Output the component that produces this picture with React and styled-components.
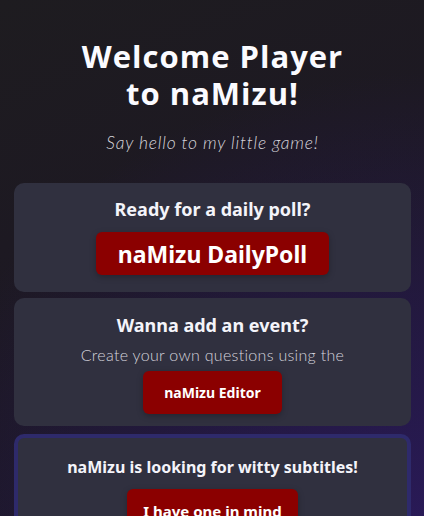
import React from "react";
import styled, { createGlobalStyle } from "styled-components";

const GlobalStyle = createGlobalStyle`
  html, body { margin: 0; padding: 0; }
  body {
    font-family: "Noto Sans", "Open Sans", sans-serif;
    background: #1b1920;
  }
`;

const Page = styled.div`
  min-height: 516px;
  box-sizing: border-box;
  padding: 38px 13px 0 14px;
  background:
    radial-gradient(ellipse 520px 480px at 100% 100%, rgba(42, 26, 90, 1), rgba(42, 26, 90, 0) 100%),
    linear-gradient(160deg, #1e1c20 0%, #1d1922 35%, #1b1628 100%);
  color: #fff;
  overflow: hidden;
`;

const Header = styled.header`
  display: flex;
  flex-direction: column;
  align-items: center;
  margin-bottom: 30px;
`;

const Title = styled.h1`
  margin: 0;
  font-family: "Open Sans", sans-serif;
  font-weight: 700;
  font-size: 31px;
  line-height: 37px;
  letter-spacing: 1px;
  text-align: center;
  color: #fbfbff;
`;

const Subtitle = styled.p`
  margin: 20px 0 0;
  font-family: "Lato", sans-serif;
  font-style: italic;
  font-weight: 300;
  font-size: 17.5px;
  color: #d6d4da;
  letter-spacing: 0.8px;
`;

const Cards = styled.div`
  display: flex;
  flex-direction: column;
  gap: 6px;
`;

const Card = styled.section`
  display: flex;
  flex-direction: column;
  align-items: center;
  background: #30303f;
  border-radius: 10px;
  padding: ${(p) => p.$pad || "16px 0 16px"};
  border: ${(p) => (p.$highlight ? "4px solid #2e2a6b" : "none")};
  margin-top: ${(p) => (p.$highlight ? "2px" : "0")};
`;

const CardTitle = styled.h2`
  margin: 0;
  font-family: "Noto Sans", sans-serif;
  font-weight: 700;
  font-size: ${(p) => p.$size || "18px"};
  line-height: 24px;
  color: #f4f4fa;
`;

const CardText = styled.p`
  margin: 8px 0 0;
  font-family: "Lato", sans-serif;
  font-weight: 300;
  font-size: 16px;
  color: #d4d3dc;
  letter-spacing: 0.3px;
`;

const Button = styled.button`
  border: none;
  background: #8b0000;
  color: #fff;
  font-family: "Noto Sans", sans-serif;
  font-weight: 700;
  font-size: ${(p) => p.$size || "14px"};
  border-radius: 6px;
  height: ${(p) => p.$height || "43px"};
  box-sizing: border-box;
  padding: 0 ${(p) => p.$padX || "20px"};
  margin-top: ${(p) => p.$mt || "10px"};
  box-shadow: 0 2px 6px rgba(0, 0, 0, 0.25);
  cursor: pointer;
`;

export default function App() {
  return (
    <>
      <GlobalStyle />
      <Page>
        <Header>
          <Title>
            Welcome Player
            <br />
            to naMizu!
          </Title>
          <Subtitle>Say hello to my little game!</Subtitle>
        </Header>
        <Cards>
          <Card $pad="14px 0 17px">
            <CardTitle>Ready for a daily poll?</CardTitle>
            <Button $size="23px" $padX="22px" $mt="11px">
              naMizu DailyPoll
            </Button>
          </Card>
          <Card $pad="15px 0 12px">
            <CardTitle>Wanna add an event?</CardTitle>
            <CardText>Create your own questions using the</CardText>
            <Button $mt="7px" $padX="21px">
              naMizu Editor
            </Button>
          </Card>
          <Card $highlight $pad="17px 0 16px">
            <CardTitle $size="16px">naMizu is looking for witty subtitles!</CardTitle>
            <Button $size="15px" $padX="16px" $mt="10px">
              I have one in mind
            </Button>
          </Card>
        </Cards>
      </Page>
    </>
  );
}
